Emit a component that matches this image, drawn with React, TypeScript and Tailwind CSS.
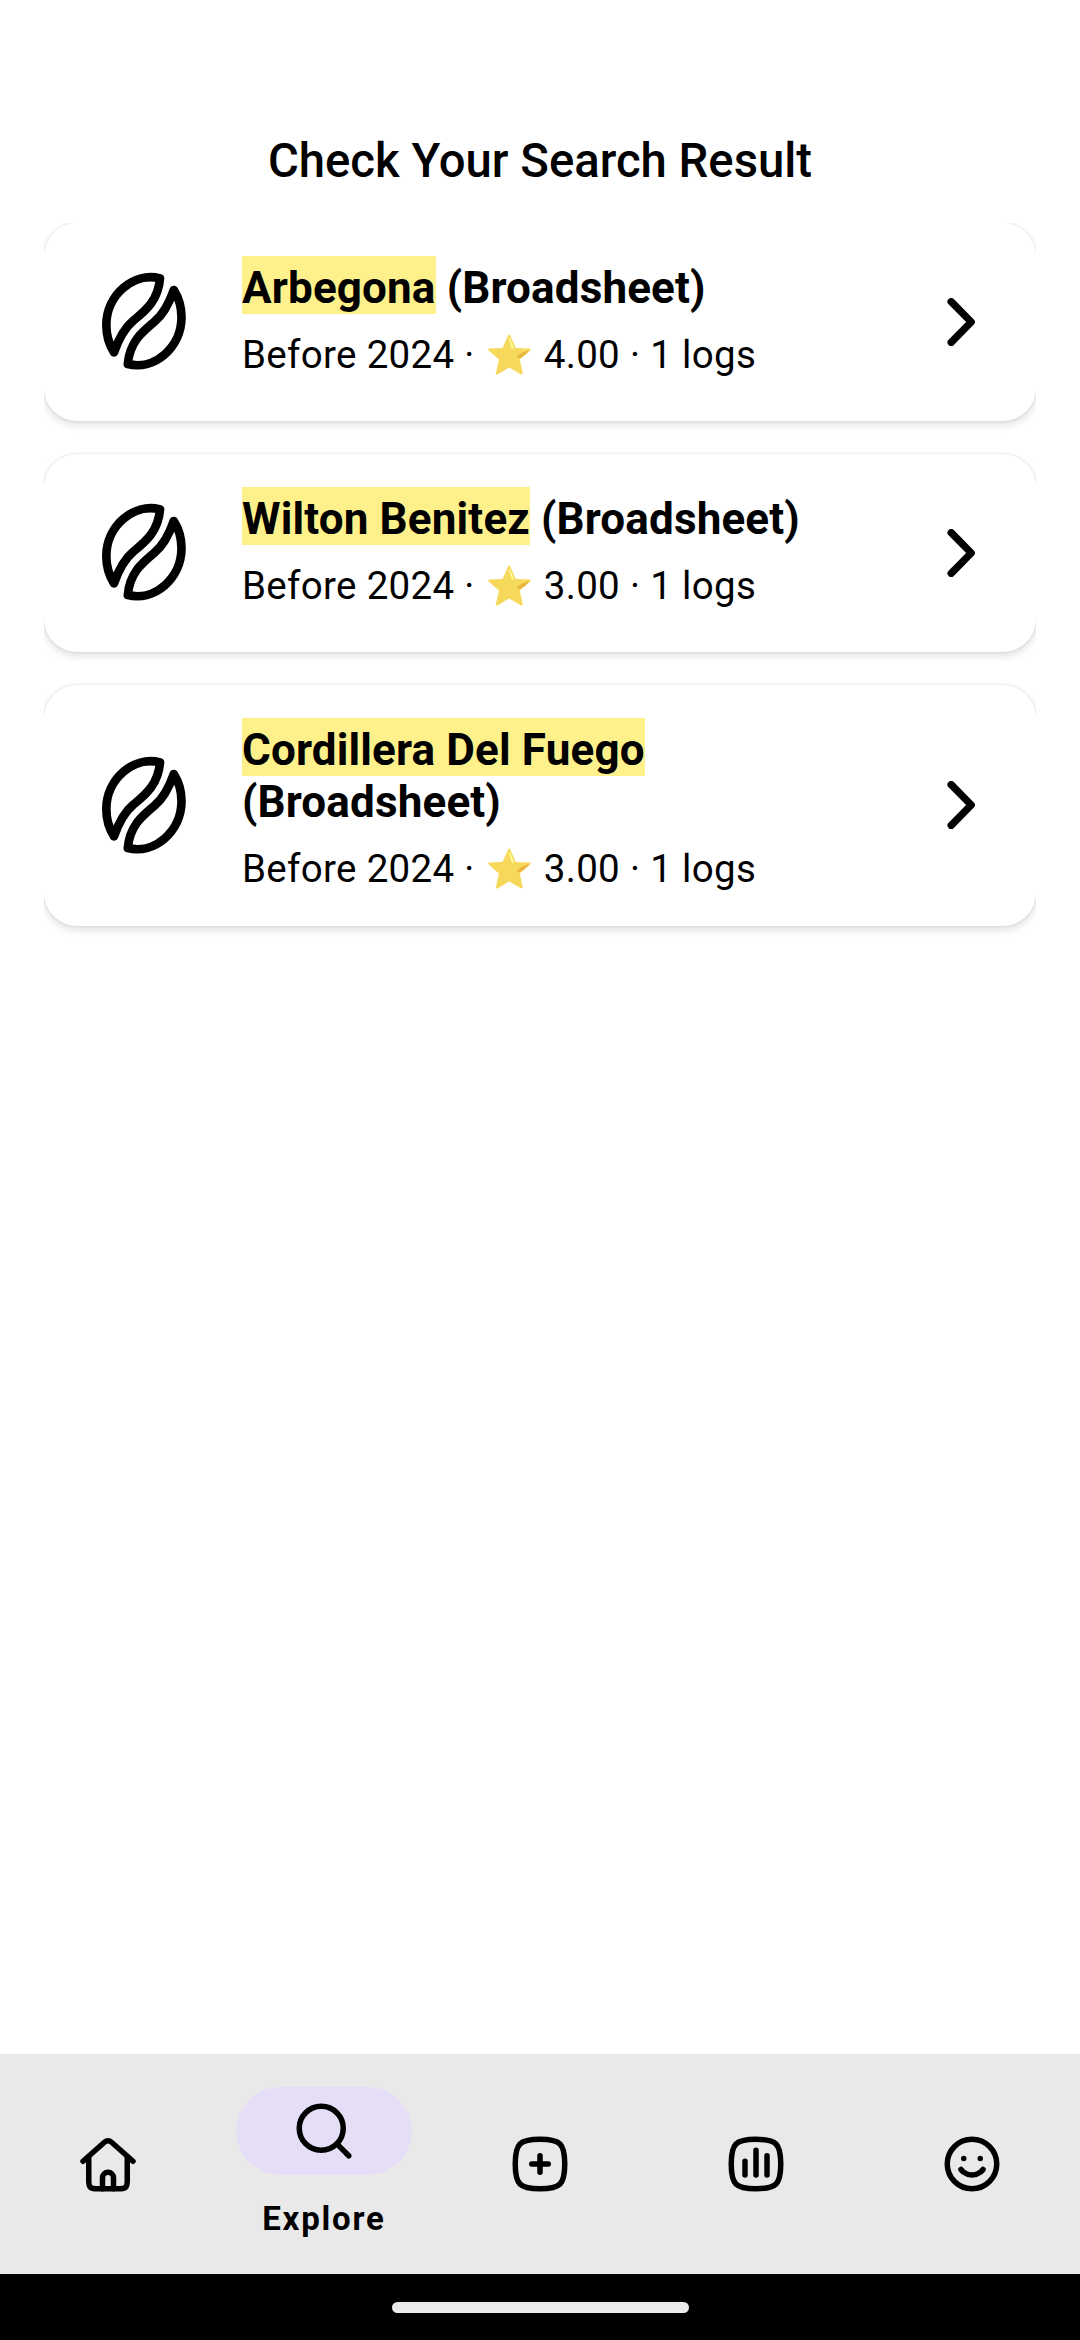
import type { ReactNode } from "react";

type Result = { name: string; roaster: string; wrap?: boolean; rating: string };

const results: Result[] = [
  { name: "Arbegona", roaster: "(Broadsheet)", rating: "4.00" },
  { name: "Wilton Benitez", roaster: "(Broadsheet)", rating: "3.00" },
  { name: "Cordillera Del Fuego", roaster: "(Broadsheet)", wrap: true, rating: "3.00" },
];

function BeanIcon() {
  const half =
    "M210 55C130 35 49 105 49 195C49 230 58 255 72 277C85 240 102 205 130 182C165 153 205 122 210 55Z";
  return (
    <svg
      viewBox="0 0 330 360"
      className="mb-1 ml-[46px] h-[120px] w-[110px] shrink-0"
      fill="none"
      stroke="#000"
      strokeWidth="26"
      strokeLinejoin="round"
    >
      <path d={half} />
      <path d={half} transform="rotate(180 161.75 183.5)" />
    </svg>
  );
}

function Star() {
  return (
    <svg viewBox="23 25 130 124" className="mr-[13px] mb-[2px] ml-[13px] h-[41px] w-[43px] shrink-0">
      <path
        d="M84 29Q87 24 90 29L107 67L148 69Q155 70 150 75L119 102L128 143Q128 149 122 147L87 126L53 147Q46 150 47 143L56 102L25 75Q21 70 27 69L67 67Z"
        fill="#f6d95b"
      />
      <path d="M85 38Q89 35 92 44L101 64Q103 71 97 70Q93 69 92 61Z" fill="#fdf991" />
      <path d="M149 74Q137 74 116 88Q107 95 115 98Q126 99 149 74Z" fill="#e9b63c" />
    </svg>
  );
}

function ResultCard({ name, roaster, wrap, rating }: Result) {
  return (
    <article
      className={`flex items-center rounded-[33px] bg-white shadow-[0_4px_8px_rgba(0,0,0,0.12),0_0_3px_rgba(0,0,0,0.12)] ${wrap ? "h-[241px]" : "h-[198px]"}`}
    >
      <BeanIcon />
      <div className="ml-[42px] flex-1 self-start pt-[39px] whitespace-nowrap">
        <h2 className="text-[44px] leading-[52px] font-bold tracking-[0.15px]">
          <mark className="bg-[#fef08a] pt-[6px] text-black">{name}</mark>
          {wrap ? <br /> : " "}
          {roaster}
        </h2>
        <p className="mt-[18px] flex h-[46px] items-center text-[38.5px] leading-[46px] tracking-[0.32px]">
          <span>Before 2024 ·</span>
          <Star />
          <span>{rating} · 1 logs</span>
        </p>
      </div>
      <svg
        viewBox="0 0 32 48"
        className="mr-[59px] mb-px h-12 w-8 shrink-0"
        fill="none"
        stroke="#000"
        strokeWidth="7.4"
        strokeLinecap="round"
        strokeLinejoin="round"
      >
        <path d="M6.2 3.7L26.2 24L6.2 44.3" />
      </svg>
    </article>
  );
}

function NavIcon({ children }: { children: ReactNode }) {
  return (
    <svg
      viewBox="0 0 24 24"
      className="size-[66px]"
      fill="none"
      stroke="#000"
      strokeWidth="2"
      strokeLinecap="round"
      strokeLinejoin="round"
    >
      {children}
    </svg>
  );
}

const squircle = "M3 12C3 4.588 4.588 3 12 3s9 1.588 9 9-1.588 9-9 9-9-1.588-9-9Z";

export default function App() {
  return (
    <div className="flex h-[2340px] w-[1080px] flex-col bg-white font-['Roboto',sans-serif] text-black">
      <header className="flex h-[223px] shrink-0 items-end justify-center pb-[34px]">
        <h1 className="text-[47.25px] leading-[56px] font-medium whitespace-nowrap">Check Your Search Result</h1>
      </header>
      <main className="mx-11 flex flex-1 flex-col gap-[33px] overflow-hidden">
        {results.map((r) => (
          <ResultCard key={r.name} {...r} />
        ))}
      </main>
      <nav className="grid h-[220px] shrink-0 grid-cols-5 items-center justify-items-center bg-[#e9e9e9]">
        <NavIcon>
          <path d="M2.9 11L10.7 4.1Q12 3 13.3 4.1L21.1 11" />
          <path d="M5 9.5V18C5 20.5 5.5 21 8 21H16C18.5 21 19 20.5 19 18V9.5" />
          <path d="M10 21V17A2 2 0 0 1 14 17V21" />
        </NavIcon>
        <div className="flex h-full flex-col items-center pt-[33px]">
          <div className="flex h-[88px] w-44 items-center justify-center rounded-full bg-[#e6def6]">
            <NavIcon>
              <circle cx="11" cy="11" r="8" />
              <path d="M21 21L16.7 16.7" />
            </NavIcon>
          </div>
          <span className="mt-[24px] text-[33px] leading-[40px] font-bold tracking-[1.8px]">Explore</span>
        </div>
        <NavIcon>
          <path d={squircle} />
          <path d="M9 12H15M12 9V15" />
        </NavIcon>
        <NavIcon>
          <path d={squircle} />
          <path d="M8 11V16M12 7V16M16 9V16" />
        </NavIcon>
        <NavIcon>
          <circle cx="12" cy="12" r="9" />
          <path d="M8 14S9.5 16 12 16S16 14 16 14" />
          <path d="M9 10H9.01M15 10H15.01" />
        </NavIcon>
      </nav>
      <footer className="flex h-[66px] shrink-0 items-center justify-center bg-black">
        <div className="h-[11px] w-[297px] rounded-full bg-[#ebebeb]" />
      </footer>
    </div>
  );
}
